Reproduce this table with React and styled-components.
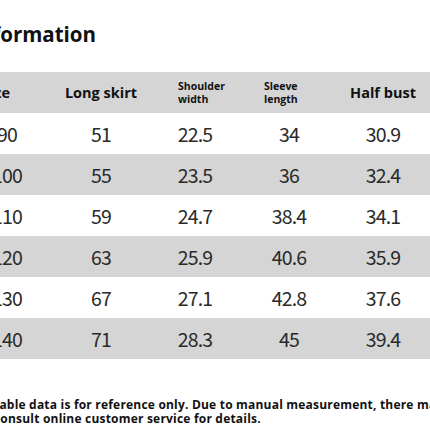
import React from "react";
import styled, { createGlobalStyle } from "styled-components";

const Global = createGlobalStyle`
  html, body { margin: 0; padding: 0; background: #fff; }
  body { width: 430px; height: 430px; overflow: hidden; }
`;

const Page = styled.div`
  width: 430px;
  height: 430px;
  overflow: hidden;
  background: #fff;
  font-family: "Open Sans", "Liberation Sans", sans-serif;
  color: #111;
`;

const Title = styled.h1`
  margin: 0;
  padding-top: 19px;
  height: 30px;
  line-height: 30px;
  margin-bottom: 23px;
  margin-left: -28px;
  font-size: 20.5px;
  font-weight: 700;
  white-space: nowrap;
  color: #111;
`;

const Table = styled.div`
  margin-left: -40px;
  width: 470px;
  display: grid;
  grid-template-columns: repeat(5, 94px);
`;

const Row = styled.div`
  display: contents;
`;

const Cell = styled.div`
  height: 41px;
  display: flex;
  align-items: center;
  justify-content: ${(p) => p.$justify || "center"};
  padding-left: ${(p) => p.$pl || 0}px;
  padding-right: ${(p) => p.$pr || 0}px;
  background: ${(p) => (p.$shade ? "#d5d5d5" : "#fff")};
  box-sizing: border-box;
`;

const HeadText = styled.span`
  font-weight: 700;
  font-size: ${(p) => p.$size}px;
  line-height: ${(p) => p.$lh}px;
  color: #111;
  text-align: left;
  white-space: nowrap;
`;

const DataText = styled.span`
  font-family: "Noto Sans CJK JP", "Liberation Sans", sans-serif;
  font-weight: 400;
  font-size: 19.5px;
  letter-spacing: -0.8px;
  color: #2a2a2a;
`;

const Footer = styled.div`
  margin-top: 39px;
  margin-left: -6px;
  font-size: 12px;
  line-height: 14px;
  font-weight: 700;
  letter-spacing: 0.2px;
  color: #111;
`;

const Line = styled.div`
  white-space: nowrap;
`;

const data = [
  ["90", "51", "22.5", "34", "30.9"],
  ["100", "55", "23.5", "36", "32.4"],
  ["110", "59", "24.7", "38.4", "34.1"],
  ["120", "63", "25.9", "40.6", "35.9"],
  ["130", "67", "27.1", "42.8", "37.6"],
  ["140", "71", "28.3", "45", "39.4"],
];

export default function App() {
  return (
    <Page>
      <Global />
      <Title>Information</Title>
      <Table>
        <Row>
          <Cell $shade $justify="flex-end" $pr={44}>
            <HeadText $size={14.5} $lh={18}>Size</HeadText>
          </Cell>
          <Cell $shade>
            <HeadText $size={14.5} $lh={18}>Long skirt</HeadText>
          </Cell>
          <Cell $shade $justify="flex-start" $pl={30}>
            <HeadText $size={10.5} $lh={13}>
              Shoulder
              <br />
              width
            </HeadText>
          </Cell>
          <Cell $shade $justify="flex-start" $pl={22}>
            <HeadText $size={10.5} $lh={13}>
              Sleeve
              <br />
              length
            </HeadText>
          </Cell>
          <Cell $shade>
            <HeadText $size={14.5} $lh={18}>Half bust</HeadText>
          </Cell>
        </Row>
        {data.map((r, i) => (
          <Row key={i}>
            {r.map((v, j) => (
              <Cell key={j} $shade={i % 2 === 1}>
                <DataText>{v}</DataText>
              </Cell>
            ))}
          </Row>
        ))}
      </Table>
      <Footer>
        <Line>table data is for reference only. Due to manual measurement, there may be an error of 1-3cm. Please</Line>
        <Line>consult online customer service for details.</Line>
      </Footer>
    </Page>
  );
}
